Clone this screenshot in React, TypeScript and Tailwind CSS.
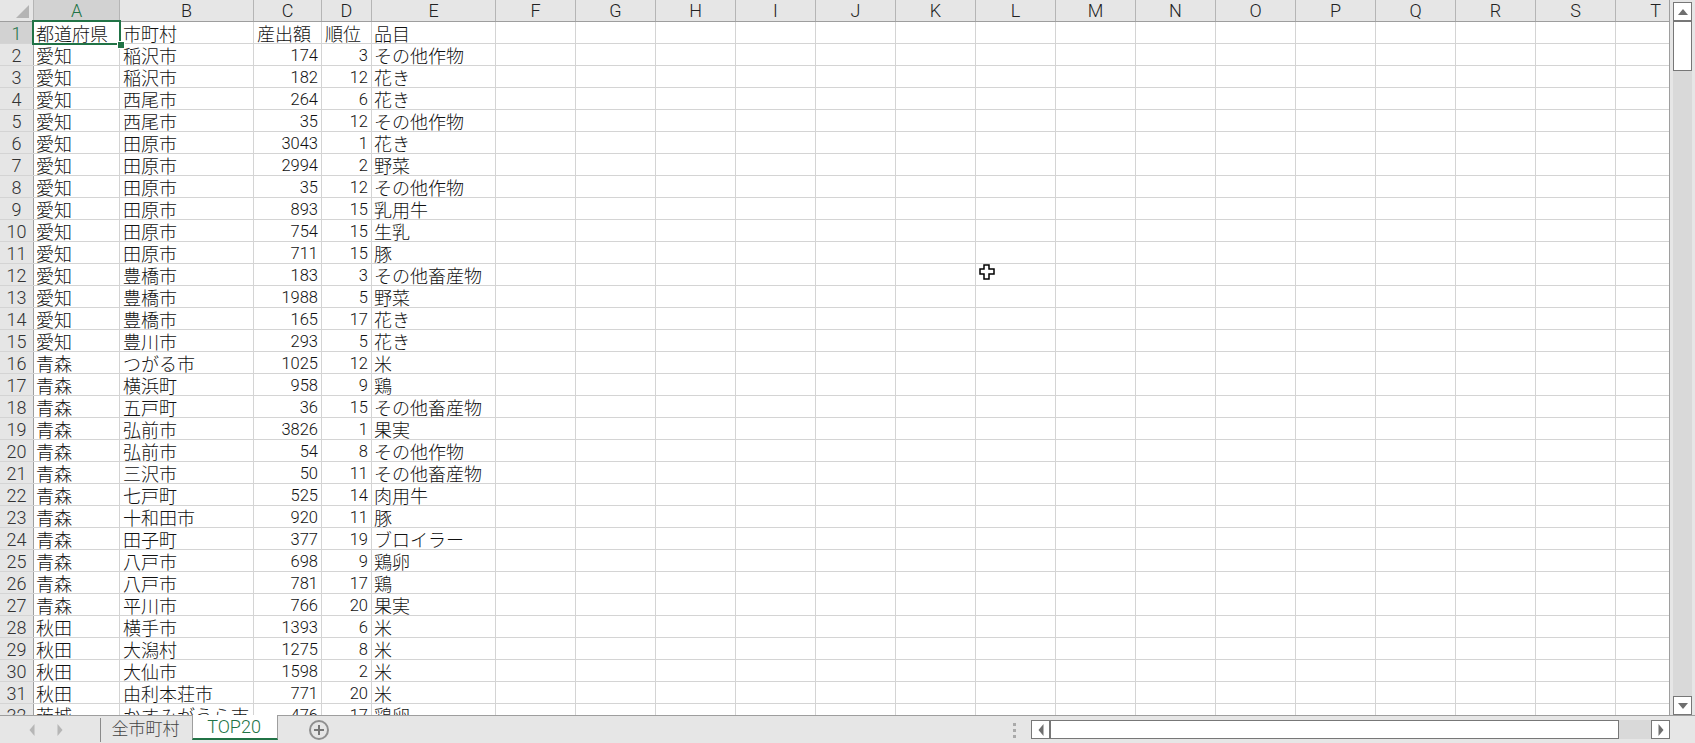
const CJK = "font-['Noto_Sans_CJK_JP','Noto_Sans_CJK_SC',sans-serif] font-light";
const NUM = "font-['Roboto','Liberation_Sans',sans-serif] font-light";

const otherCols = ['F', 'G', 'H', 'I', 'J', 'K', 'L', 'M', 'N', 'O', 'P', 'Q', 'R', 'S', 'T'];

const rows: [string, string, string, string, string][] = [
  ['都道府県', '市町村', '産出額', '順位', '品目'],
  ['愛知', '稲沢市', '174', '3', 'その他作物'],
  ['愛知', '稲沢市', '182', '12', '花き'],
  ['愛知', '西尾市', '264', '6', '花き'],
  ['愛知', '西尾市', '35', '12', 'その他作物'],
  ['愛知', '田原市', '3043', '1', '花き'],
  ['愛知', '田原市', '2994', '2', '野菜'],
  ['愛知', '田原市', '35', '12', 'その他作物'],
  ['愛知', '田原市', '893', '15', '乳用牛'],
  ['愛知', '田原市', '754', '15', '生乳'],
  ['愛知', '田原市', '711', '15', '豚'],
  ['愛知', '豊橋市', '183', '3', 'その他畜産物'],
  ['愛知', '豊橋市', '1988', '5', '野菜'],
  ['愛知', '豊橋市', '165', '17', '花き'],
  ['愛知', '豊川市', '293', '5', '花き'],
  ['青森', 'つがる市', '1025', '12', '米'],
  ['青森', '横浜町', '958', '9', '鶏'],
  ['青森', '五戸町', '36', '15', 'その他畜産物'],
  ['青森', '弘前市', '3826', '1', '果実'],
  ['青森', '弘前市', '54', '8', 'その他作物'],
  ['青森', '三沢市', '50', '11', 'その他畜産物'],
  ['青森', '七戸町', '525', '14', '肉用牛'],
  ['青森', '十和田市', '920', '11', '豚'],
  ['青森', '田子町', '377', '19', 'ブロイラー'],
  ['青森', '八戸市', '698', '9', '鶏卵'],
  ['青森', '八戸市', '781', '17', '鶏'],
  ['青森', '平川市', '766', '20', '果実'],
  ['秋田', '横手市', '1393', '6', '米'],
  ['秋田', '大潟村', '1275', '8', '米'],
  ['秋田', '大仙市', '1598', '2', '米'],
  ['秋田', '由利本荘市', '771', '20', '米'],
  ['茨城', 'かすみがうら市', '476', '17', '鶏卵'],
];

const colHead = `shrink-0 h-full flex items-center justify-center border-r border-[#b5b5b5] text-[18px] text-[#222] ${NUM}`;
const cell = 'shrink-0 h-full border-r border-[#d4d4d4] overflow-visible whitespace-nowrap leading-[22px]';
const numCell = `${cell} ${NUM} pt-px pr-[3px] text-right text-[16.5px]`;

const Arrow = ({ dir }: { dir: 'up' | 'down' | 'left' | 'right' }) => {
  const points = {
    up: '1,7 11,7 6,1',
    down: '1,1 11,1 6,7',
    left: '6,0 6,12 1,6',
    right: '1,0 1,12 6,6',
  }[dir];
  const size = dir === 'up' || dir === 'down' ? 'w-3 h-2' : 'w-2 h-3';
  const box = dir === 'up' || dir === 'down' ? '0 0 12 8' : '0 0 7 12';
  return (
    <svg viewBox={box} className={size}>
      <polygon points={points} fill="#6f6f6f" />
    </svg>
  );
};

const ScrollButton = ({ dir }: { dir: 'up' | 'down' | 'left' | 'right' }) => (
  <div className="w-[19px] h-[19px] shrink-0 bg-white border border-[#777] flex items-center justify-center">
    <Arrow dir={dir} />
  </div>
);

const App = () => {
  return (
    <div className="relative w-[1695px] h-[743px] overflow-hidden bg-[#e6e6e6] flex flex-col font-['Liberation_Sans',sans-serif]">
      <div className="h-[716px] shrink-0 flex border-b border-[#9e9e9e]">
        {/* sheet */}
        <div className="relative w-[1670px] shrink-0 overflow-hidden border-r border-[#9e9e9e] bg-white">
          <div className="flex h-[22px] w-[1800px] bg-[#e6e6e6] border-b border-[#9e9e9e]">
            <div className="w-[34px] shrink-0 border-r border-[#b5b5b5] flex items-end justify-end pr-[4px] pb-[3px]">
              <div className="w-0 h-0 border-l-[13px] border-l-transparent border-b-[13px] border-b-[#b4b4b4]" />
            </div>
            <div className={`w-[86px] shrink-0 h-[22px] flex items-center justify-center bg-[#d2d2d2] border-r border-[#b5b5b5] border-b-2 border-b-[#217346] text-[18px] text-[#217346] ${NUM}`}>A</div>
            <div className={`${colHead} w-[134px]`}>B</div>
            <div className={`${colHead} w-[68px]`}>C</div>
            <div className={`${colHead} w-[50px]`}>D</div>
            <div className={`${colHead} w-[124px]`}>E</div>
            {otherCols.map((c) => (
              <div key={c} className={`${colHead} w-[80px]`}>{c}</div>
            ))}
          </div>

          {rows.map((r, i) => (
            <div key={i} className="flex h-[22px] w-[1800px] border-b border-[#d4d4d4] text-[#111]">
              <div className={`w-[34px] shrink-0 h-full pt-px border-r border-[#9e9e9e] flex items-center justify-center text-[18px] ${NUM} ${i === 0 ? 'bg-[#d2d2d2] text-[#217346]' : 'bg-[#e6e6e6] text-[#333]'}`}>
                {i + 1}
              </div>
              <div className={`${cell} ${CJK} w-[86px] pl-[2px] text-[18px]`}>{r[0]}</div>
              <div className={`${cell} ${CJK} w-[134px] pl-[3px] text-[18px]`}>{r[1]}</div>
              {i === 0 ? (
                <div className={`${cell} ${CJK} w-[68px] pl-[3px] text-[18px]`}>{r[2]}</div>
              ) : (
                <div className={`${numCell} w-[68px]`}>{r[2]}</div>
              )}
              {i === 0 ? (
                <div className={`${cell} ${CJK} w-[50px] pl-[3px] text-[18px]`}>{r[3]}</div>
              ) : (
                <div className={`${numCell} w-[50px]`}>{r[3]}</div>
              )}
              <div className={`${cell} ${CJK} w-[124px] pl-[2px] text-[18px]`}>{r[4]}</div>
              {otherCols.map((c) => (
                <div key={c} className={`${cell} w-[80px]`} />
              ))}
            </div>
          ))}

          {/* active cell */}
          <div className="absolute left-[32px] top-[20px] w-[89px] h-[25px] border-2 border-[#217346]" />
          <div className="absolute left-[117px] top-[41px] w-[6px] h-[6px] bg-[#217346] border border-white box-content" />
        </div>

        {/* vertical scrollbar */}
        <div className="flex-1 pl-[3px] pr-[3px] pt-[2px] flex flex-col">
          <ScrollButton dir="up" />
          <div className="w-[19px] h-[50px] shrink-0 bg-white border border-[#777]" />
          <div className="flex-1 w-[19px] bg-[#d9d9d9]" />
          <ScrollButton dir="down" />
        </div>
      </div>

      {/* sheet tabs */}
      <div className="flex-1 flex items-start">
        <div className="w-[101px] shrink-0 h-[24px] mt-[2px] flex items-center border-r border-[#8a8a8a]">
          <div className="ml-[28px] flex gap-[20px] opacity-40 [&>svg]:h-[12px]">
            <Arrow dir="left" />
            <Arrow dir="right" />
          </div>
        </div>
        <div className={`w-[91px] shrink-0 h-[24px] pr-[2px] text-center text-[17px] leading-[24px] text-[#444] ${CJK}`}>全市町村</div>
        <div className={`w-[86px] shrink-0 h-[25px] -mt-px pr-[2px] bg-white border-x border-[#9e9e9e] border-b-2 border-b-[#217346] text-center text-[18px] leading-[24px] text-[#217346] ${NUM}`}>TOP20</div>
        <div className="ml-[31px] mt-[4px] w-[20px] h-[20px] shrink-0 rounded-full border-2 border-[#8f8f8f] flex items-center justify-center">
          <svg viewBox="0 0 10 10" className="w-[10px] h-[10px]">
            <path d="M5 0v10M0 5h10" stroke="#777" strokeWidth="2" />
          </svg>
        </div>
        <div className="flex-1" />
        <div className="mt-[7px] mr-[15px] flex flex-col gap-[3px]">
          <div className="w-[3px] h-[3px] bg-[#aaa]" />
          <div className="w-[3px] h-[3px] bg-[#aaa]" />
          <div className="w-[3px] h-[3px] bg-[#aaa]" />
        </div>
        <div className="mt-[4px] w-[639px] mr-[25px] shrink-0 flex">
          <ScrollButton dir="left" />
          <div className="w-[569px] h-[19px] shrink-0 bg-white border border-[#777]" />
          <div className="flex-1 h-[19px] bg-[#d9d9d9]" />
          <ScrollButton dir="right" />
        </div>
      </div>

      {/* mouse cursor */}
      <svg viewBox="0 0 16 16" className="absolute left-[979px] top-[264px] w-[16px] h-[16px]">
        <path d="M5 1h5v4h5v5h-5v5H5v-5H1V5h4z" fill="#fff" stroke="#000" strokeWidth="1.5" />
      </svg>
    </div>
  );
};

export default App;
